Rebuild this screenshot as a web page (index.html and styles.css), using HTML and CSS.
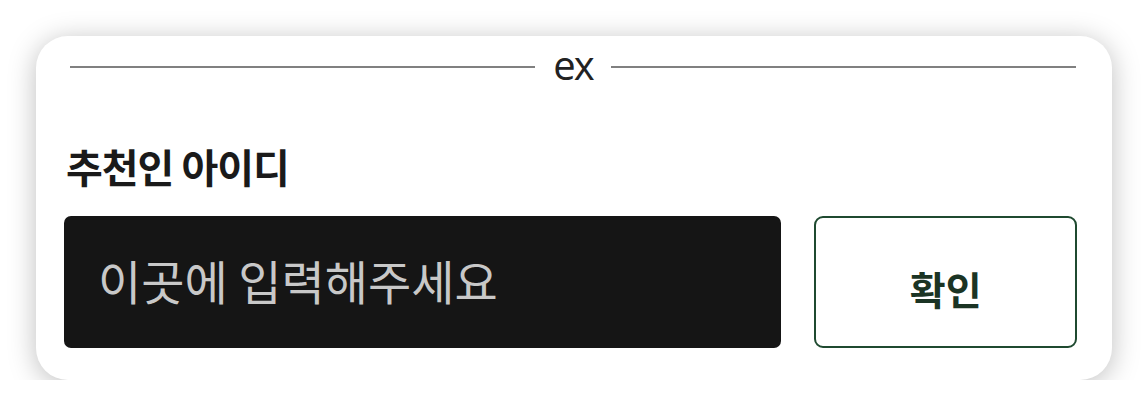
FILE: index.html
```html
<!DOCTYPE html>
<html>
    <head>
        <title>추천인 아이디</title>
        <link rel="stylesheet" href="styles.css">
    </head>
    <body>
        <div class="card">
            <!-- separateur -->
            <div class="divider">
                <span class="rule"></span>
                <span class="divider-text">ex</span>
                <span class="rule"></span>
            </div>

            <p class="label">추천인 아이디</p>
            <div class="row">
                <div class="input">이곳에 입력해주세요</div>
                <div class="button">확인</div>
            </div>
        </div>
    </body>
</html>
```

FILE: styles.css
```css
body {
    margin: 0;
    background-color: #ffffff;
    font-family: "Noto Sans CJK KR", "Noto Sans", sans-serif;
}
.card {
    margin: 36px 0 0 36px;
    width: 1076px;
    height: 344px;
    box-sizing: border-box;
    padding: 14px 35px 0 28px;
    background-color: #ffffff;
    border-radius: 32px;
    box-shadow: 0 4px 28px rgba(0, 0, 0, 0.26);
}
.divider {
    display: flex;
    align-items: center;
    gap: 18px;
    height: 34px;
    padding: 0 1px 0 6px;
}
.rule {
    flex: 1;
    height: 2px;
    background-color: #808080;
}
.divider-text {
    font-family: "Open Sans", sans-serif;
    font-size: 40px;
    line-height: 34px;
    color: #222222;
    margin-top: -4px;
    letter-spacing: -2px;
}
.label {
    margin: 58px 0 0 2px;
    font-size: 40px;
    font-weight: bold;
    line-height: 48px;
    color: #1a1a1a;
    letter-spacing: -1px;
}
.row {
    display: flex;
    gap: 33px;
    margin-top: 26px;
}
.input {
    width: 718px;
    height: 132px;
    box-sizing: border-box;
    padding: 0 34px 6px;
    display: flex;
    align-items: center;
    background-color: #151515;
    border-radius: 7px;
    font-size: 47px;
    color: #c8c8c8;
}
.button {
    width: 263px;
    height: 132px;
    box-sizing: border-box;
    border: 2px solid #1f4a30;
    border-radius: 9px;
    display: flex;
    align-items: center;
    justify-content: center;
    padding-top: 12px;
    font-size: 39px;
    font-weight: bold;
    color: #1b3424;
}
```
